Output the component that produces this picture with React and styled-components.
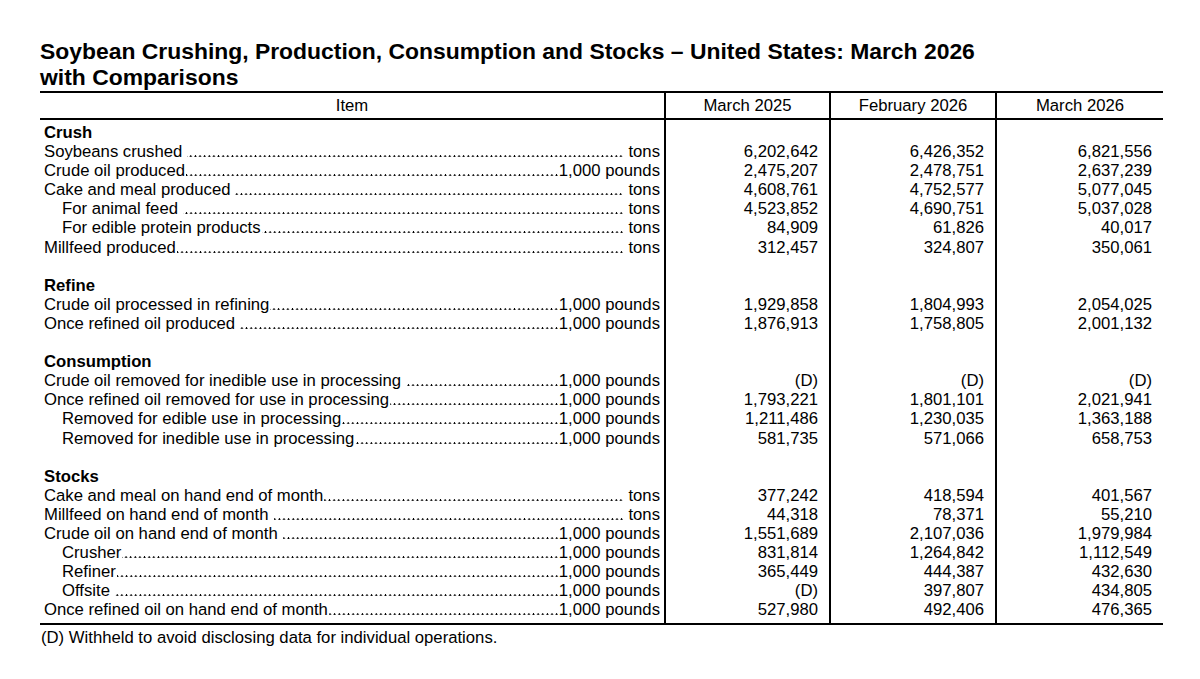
import React from 'react'
import styled, { createGlobalStyle } from 'styled-components'

const GlobalStyle = createGlobalStyle`
  html, body {
    margin: 0;
    padding: 0;
    background: #fff;
  }
  body {
    font-family: "Liberation Sans", Arial, sans-serif;
    color: #000;
  }
`

// lead: a space between the label and its dot leader
const sections = [
  {
    title: 'Crush',
    rows: [
      { label: 'Soybeans crushed', unit: 'tons', lead: true, values: ['6,202,642', '6,426,352', '6,821,556'] },
      { label: 'Crude oil produced', unit: '1,000 pounds', values: ['2,475,207', '2,478,751', '2,637,239'] },
      { label: 'Cake and meal produced', unit: 'tons', lead: true, values: ['4,608,761', '4,752,577', '5,077,045'] },
      { label: 'For animal feed', unit: 'tons', lead: true, indent: true, values: ['4,523,852', '4,690,751', '5,037,028'] },
      { label: 'For edible protein products', unit: 'tons', indent: true, values: ['84,909', '61,826', '40,017'] },
      { label: 'Millfeed produced', unit: 'tons', values: ['312,457', '324,807', '350,061'] },
    ],
  },
  {
    title: 'Refine',
    rows: [
      { label: 'Crude oil processed in refining', unit: '1,000 pounds', values: ['1,929,858', '1,804,993', '2,054,025'] },
      { label: 'Once refined oil produced', unit: '1,000 pounds', lead: true, values: ['1,876,913', '1,758,805', '2,001,132'] },
    ],
  },
  {
    title: 'Consumption',
    rows: [
      { label: 'Crude oil removed for inedible use in processing', unit: '1,000 pounds', lead: true, values: ['(D)', '(D)', '(D)'] },
      { label: 'Once refined oil removed for use in processing', unit: '1,000 pounds', values: ['1,793,221', '1,801,101', '2,021,941'] },
      { label: 'Removed for edible use in processing', unit: '1,000 pounds', indent: true, values: ['1,211,486', '1,230,035', '1,363,188'] },
      { label: 'Removed for inedible use in processing', unit: '1,000 pounds', indent: true, values: ['581,735', '571,066', '658,753'] },
    ],
  },
  {
    title: 'Stocks',
    last: true,
    rows: [
      { label: 'Cake and meal on hand end of month', unit: 'tons', values: ['377,242', '418,594', '401,567'] },
      { label: 'Millfeed on hand end of month', unit: 'tons', lead: true, values: ['44,318', '78,371', '55,210'] },
      { label: 'Crude oil on hand end of month', unit: '1,000 pounds', lead: true, values: ['1,551,689', '2,107,036', '1,979,984'] },
      { label: 'Crusher', unit: '1,000 pounds', indent: true, values: ['831,814', '1,264,842', '1,112,549'] },
      { label: 'Refiner', unit: '1,000 pounds', indent: true, values: ['365,449', '444,387', '432,630'] },
      { label: 'Offsite', unit: '1,000 pounds', lead: true, indent: true, values: ['(D)', '397,807', '434,805'] },
      { label: 'Once refined oil on hand end of month', unit: '1,000 pounds', values: ['527,980', '492,406', '476,365'] },
    ],
  },
]

const columns = ['March 2025', 'February 2026', 'March 2026']

const App = () => {
  return (
    <Page>
      <GlobalStyle />
      <Title>
        Soybean Crushing, Production, Consumption and Stocks – United States: March 2026
        <br />
        with Comparisons
      </Title>
      <Table>
        <colgroup>
          <col style={{ width: 625 }} />
          <col style={{ width: 165 }} />
          <col style={{ width: 166 }} />
          <col style={{ width: 167 }} />
        </colgroup>
        <thead>
          <tr>
            <HeadCell>Item</HeadCell>
            {columns.map(c => <HeadCell key={c} $divided>{c}</HeadCell>)}
          </tr>
        </thead>
        <tbody>
          {sections.map((section, si) => (
            <React.Fragment key={section.title}>
              <tr>
                <ItemCell $first={si === 0}><SectionName>{section.title}</SectionName></ItemCell>
                {columns.map(c => <ValueCell key={c} $first={si === 0} />)}
              </tr>
              {section.rows.map((row, ri) => {
                const isLast = section.last && ri === section.rows.length - 1
                return (
                  <tr key={row.label}>
                    <ItemCell $last={isLast}>
                      <Leader $indent={row.indent}>
                        <Label>{row.label}</Label>
                        <Dots $lead={row.lead} $tail={row.unit === 'tons'} />
                        <Unit>{row.unit}</Unit>
                      </Leader>
                    </ItemCell>
                    {row.values.map((v, vi) => (
                      <ValueCell key={vi} $last={isLast}>{v}</ValueCell>
                    ))}
                  </tr>
                )
              })}
              {!section.last && (
                <tr>
                  <ItemCell><Blank /></ItemCell>
                  {columns.map(c => <ValueCell key={c} />)}
                </tr>
              )}
            </React.Fragment>
          ))}
        </tbody>
      </Table>
      <Footnote>(D) Withheld to avoid disclosing data for individual operations.</Footnote>
    </Page>
  )
}

const Page = styled.main`
  width: 1123px;
  padding: 38px 0 0 40px;
`

const Title = styled.h1`
  margin: 0 0 1px;
  font-size: 22.9px;
  line-height: 26px;
  font-weight: 700;
  white-space: nowrap;
`

const Table = styled.table`
  width: 1123px;
  table-layout: fixed;
  border-collapse: collapse;
  border-top: 2px solid #000;
  border-bottom: 2px solid #000;
  font-size: 16.7px;
`

const HeadCell = styled.th`
  height: 25px;
  padding: 0;
  font-weight: 400;
  text-align: center;
  line-height: 19px;
  border-bottom: 2px solid #000;
  border-left: ${p => (p.$divided ? '2px solid #000' : 'none')};
`

const ItemCell = styled.td`
  padding: ${p => (p.$first ? '3px' : '0')} 4px ${p => (p.$last ? '4px' : '0')} 4px;
  line-height: 19.1px;
  height: 19.1px;
  white-space: nowrap;
`

const ValueCell = styled.td`
  padding: ${p => (p.$first ? '3px' : '0')} 11px ${p => (p.$last ? '4px' : '0')} 0;
  line-height: 19.1px;
  height: 19.1px;
  text-align: right;
  border-left: 2px solid #000;
  white-space: nowrap;
`

const SectionName = styled.span`
  font-weight: 700;
`

const Leader = styled.div`
  display: flex;
  height: 19.1px;
  padding-left: ${p => (p.$indent ? '18px' : '0')};
`

const Label = styled.span`
  flex: none;
`

const Dots = styled.span`
  flex: 1;
  min-width: 0;
  margin: 0 ${p => (p.$tail ? '5px' : '0')} 0 ${p => (p.$lead ? '5px' : '1px')};
  background-image: radial-gradient(circle at 50% 14.3px, #000 0.75px, transparent 1.2px);
  background-size: 4.64px 19.1px;
  background-position: right top;
  background-repeat: repeat-x;
`

const Unit = styled.span`
  flex: none;
`

const Blank = styled.div`
  height: 19.1px;
`

const Footnote = styled.p`
  margin: 3px 0 0 1px;
  font-size: 16.7px;
  line-height: 19px;
`

export default App
